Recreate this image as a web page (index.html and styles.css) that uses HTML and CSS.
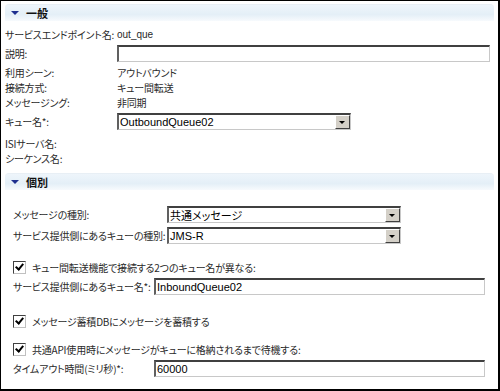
FILE: index.html
```html
<!DOCTYPE html>
<html lang="ja">

<head>
  <meta charset="UTF-8" />
  <title>サービスエンドポイント</title>
  <link rel="stylesheet" href="styles.css">
</head>

<body>
  <div class="frame">
    <!-- 一般 -->
    <div class="sec-head"><span class="tri"></span>一般</div>
    <div class="general">
      <div class="row"><span class="lbl">サービスエンドポイント名:</span><span class="plain">out_que</span></div>
      <div class="row tall"><span class="lbl">説明:</span><span class="field wide"></span></div>
      <div class="row"><span class="lbl">利用シーン:</span><span>アウトバウンド</span></div>
      <div class="row"><span class="lbl">接続方式:</span><span>キュー間転送</span></div>
      <div class="row"><span class="lbl">メッセージング:</span><span>非同期</span></div>
      <div class="row tall"><span class="lbl">キュー名*:</span>
        <span class="field sel"><span class="val">OutboundQueue02</span><span class="drop"></span></span>
      </div>
      <div class="row gap"><span class="lbl">ISIサーバ名:</span></div>
      <div class="row"><span class="lbl">シーケンス名:</span></div>
    </div>

    <!-- 個別 -->
    <div class="sec-head second"><span class="tri"></span>個別</div>
    <div class="detail">
      <div class="row tall first"><span class="lbl2">メッセージの種別:</span>
        <span class="field sel"><span class="val">共通メッセージ</span><span class="drop"></span></span>
      </div>
      <div class="row tall"><span class="lbl2">サービス提供側にあるキューの種別:</span>
        <span class="field sel"><span class="val">JMS-R</span><span class="drop"></span></span>
      </div>
      <div class="row check-row c1"><span class="cb"></span>キュー間転送機能で接続する2つのキュー名が異なる:</div>
      <div class="row tall"><span class="lbl3">サービス提供側にあるキュー名*:</span>
        <span class="field wide2"><span class="val">InboundQueue02</span></span>
      </div>
      <div class="row check-row c2"><span class="cb"></span>メッセージ蓄積DBにメッセージを蓄積する</div>
      <div class="row check-row c3"><span class="cb"></span>共通API使用時にメッセージがキューに格納されるまで待機する:</div>
      <div class="row tall"><span class="lbl3">タイムアウト時間(ミリ秒)*:</span>
        <span class="field wide2"><span class="val">60000</span></span>
      </div>
    </div>
  </div>
</body>

</html>
```

FILE: styles.css
```css
body {
  margin: 0;
  padding: 0;
  background-color: #fff;
  font-family: "Noto Sans CJK JP", "Liberation Sans", sans-serif;
  font-size: 10px;
  letter-spacing: -0.2px;
  font-feature-settings: "palt";
  color: #2a2a2a;
}

.frame {
  width: 500px;
  height: 391px;
  box-sizing: border-box;
  border-top: 1px solid #000;
  border-left: 1px solid #000;
  border-right: 2px solid #000;
  border-bottom: 2px solid #000;
  padding-top: 3px;
  overflow: hidden;
}

/* セクション見出し */
.sec-head {
  margin: 0 4px 0 4px;
  height: 16px;
  line-height: 16px;
  border-radius: 4px 4px 0 0;
  background: linear-gradient(#eef5fb, #e4eff7 60%, #f7fafd);
  border-top: 1px solid #e8eff5;
  font-weight: bold;
  font-size: 11px;
  letter-spacing: 0;
  color: #111;
  display: flex;
  align-items: center;
  padding-left: 6px;
}

.sec-head.second {
  margin-top: 7px;
}

.tri {
  width: 0;
  height: 0;
  border-left: 4px solid transparent;
  border-right: 4px solid transparent;
  border-top: 4px solid #1f2f8f;
  margin-right: 7px;
}

.row {
  display: flex;
  align-items: center;
  height: 15px;
  white-space: nowrap;
}

.row.tall {
  height: 19px;
  margin: 2px 0;
}

.row.gap {
  margin-top: 5px;
}

.general {
  padding: 6px 0 0 4px;
}

.general .lbl {
  width: 112px;
  flex: none;
}

.plain {
  font-family: "Liberation Sans", sans-serif;
  letter-spacing: 0;
}

.detail {
  padding: 0 0 0 12px;
}

.detail .first {
  margin-top: 15px;
}

.lbl2 {
  width: 154px;
  flex: none;
}

.lbl3 {
  width: 141px;
  flex: none;
}

/* 入力欄 (くぼみ枠) */
.field {
  box-sizing: border-box;
  height: 17px;
  background: #fff;
  border-top: 2px solid #404040;
  border-left: 2px solid #606060;
  border-right: 1px solid #c8c8c8;
  border-bottom: 1px solid #c8c8c8;
  display: flex;
  align-items: center;
  font-family: "Liberation Sans", "Noto Sans CJK JP", sans-serif;
  font-size: 11px;
  letter-spacing: 0;
  color: #000;
}

.field .val {
  flex: 1;
  padding-left: 1px;
}

.wide {
  width: 373px;
}

.wide2 {
  width: 331px;
}

.sel {
  width: 234px;
}

.drop {
  width: 15px;
  height: 14px;
  box-sizing: border-box;
  background: #d4d0c8;
  border-top: 1px solid #fff;
  border-left: 1px solid #fff;
  border-right: 1px solid #404040;
  border-bottom: 1px solid #404040;
  position: relative;
}

.drop::after {
  content: "";
  position: absolute;
  left: 3px;
  top: 5px;
  border-left: 3px solid transparent;
  border-right: 3px solid transparent;
  border-top: 3px solid #000;
}

/* チェックボックス */
.check-row {
  height: 15px;
}

.c1 {
  margin-top: 15px;
}

.c2 {
  margin-top: 18px;
}

.c3 {
  margin-top: 13px;
}

.cb {
  width: 13px;
  height: 13px;
  box-sizing: border-box;
  border-top: 1px solid #404040;
  border-left: 1px solid #404040;
  border-right: 1px solid #c0c0c0;
  border-bottom: 1px solid #c0c0c0;
  background: #fff;
  margin-right: 6px;
  position: relative;
}

.cb::after {
  content: "";
  position: absolute;
  left: 3px;
  top: 0px;
  width: 3px;
  height: 6px;
  border-right: 2px solid #000;
  border-bottom: 2px solid #000;
  transform: rotate(40deg);
}
```
